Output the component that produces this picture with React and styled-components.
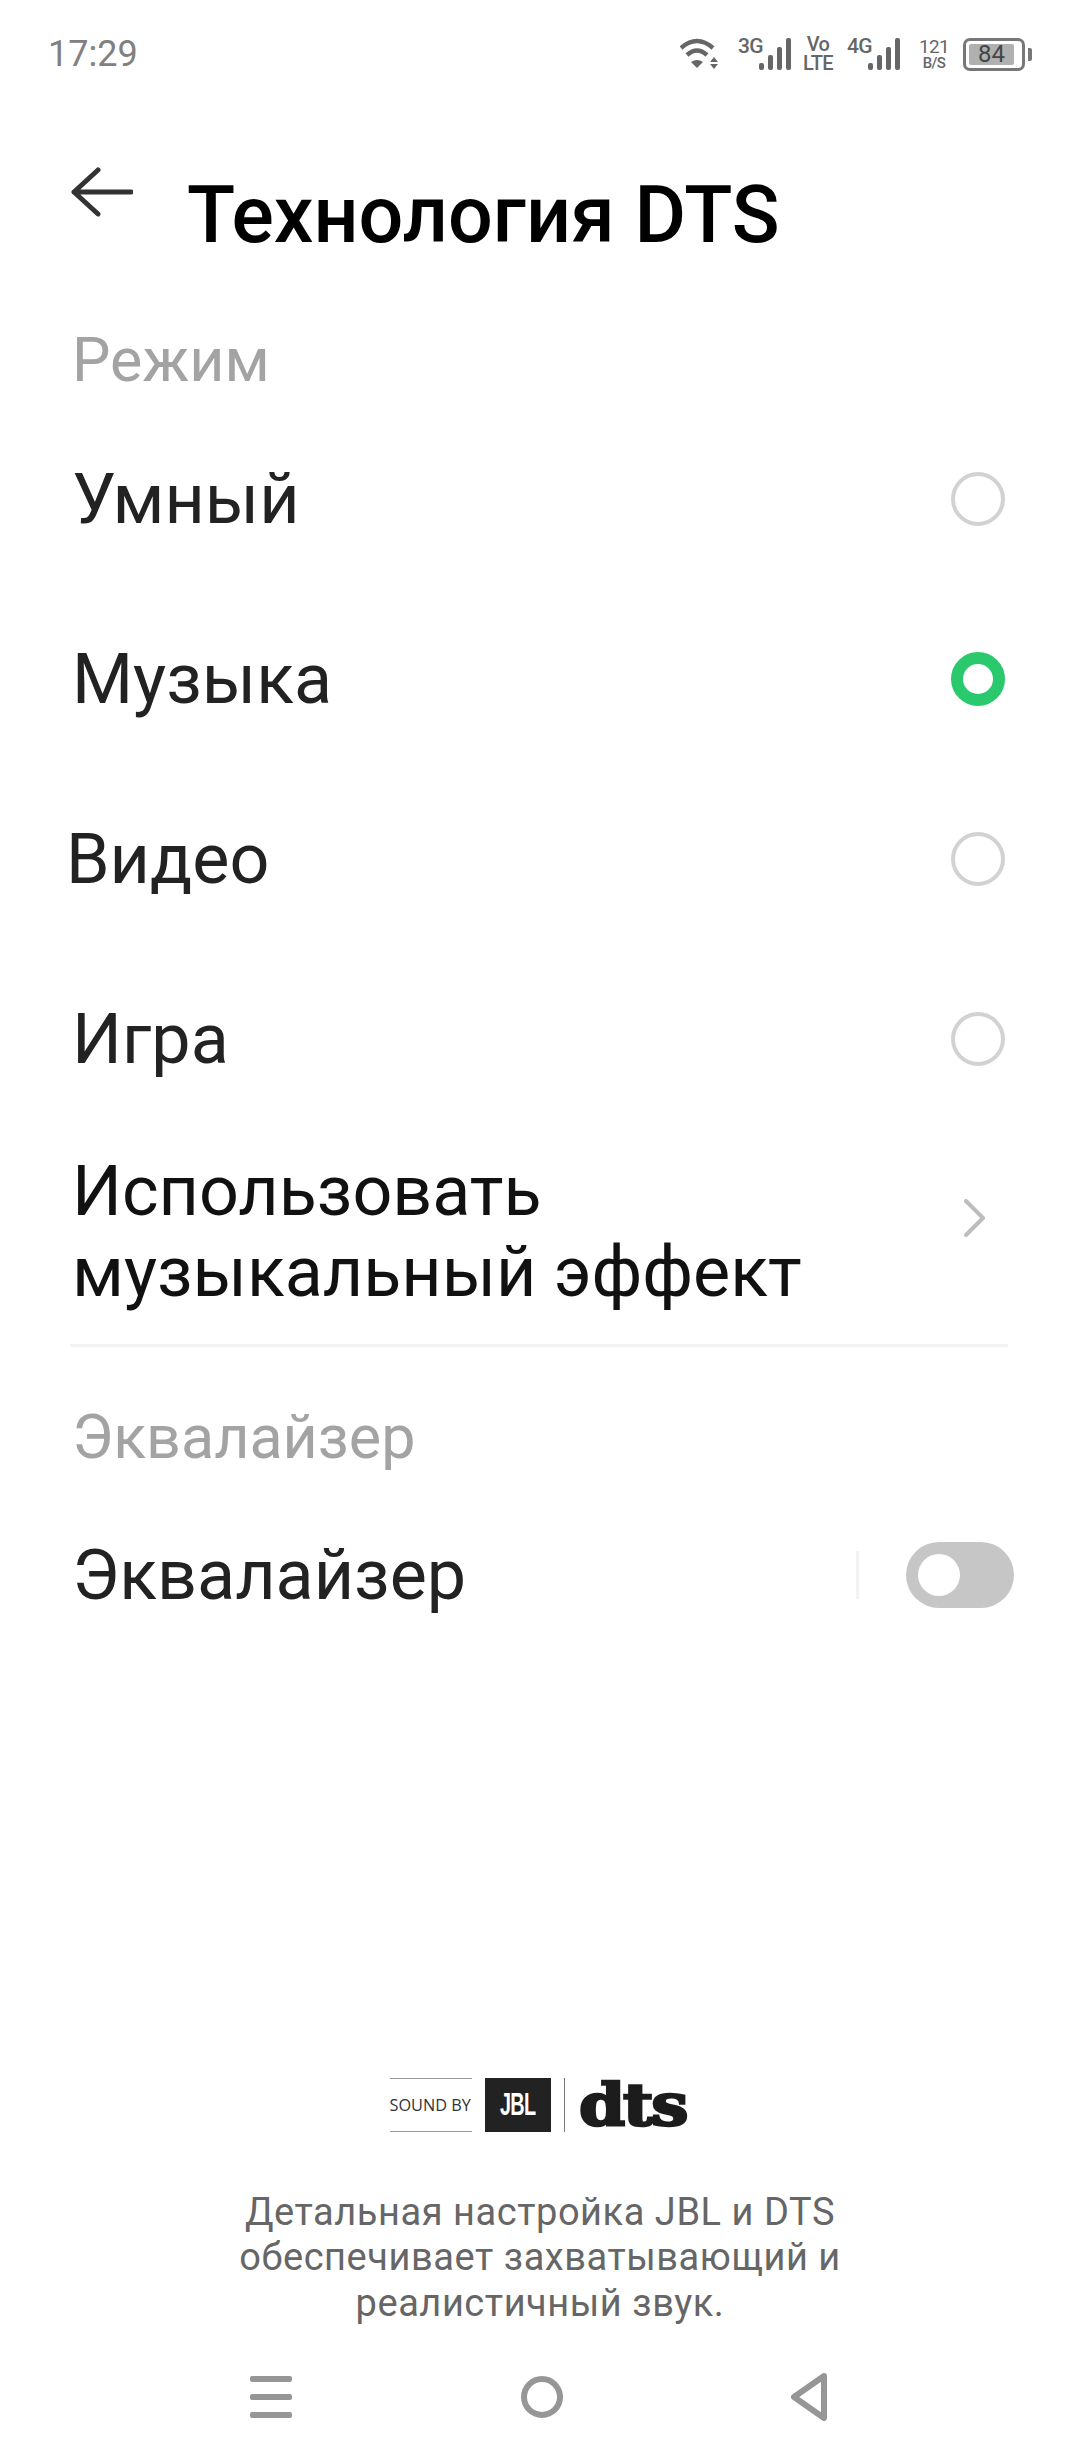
import React from "react";
import styled, { createGlobalStyle } from "styled-components";

const GlobalStyle = createGlobalStyle`
  html, body { margin: 0; padding: 0; background: #fff; }
  * { box-sizing: border-box; }
`;

const modes = [
  { label: "Умный" },
  { label: "Музыка", checked: true },
  { label: "Видео", shift: 66 },
  { label: "Игра" },
];

const Signal = () => (
  <svg width="32" height="32" viewBox="0 0 32 32" fill="#666">
    <rect x="0" y="25" width="5" height="7" rx="2" />
    <rect x="9" y="17" width="5" height="15" rx="2" />
    <rect x="18" y="9" width="5" height="23" rx="2" />
    <rect x="27" y="0" width="5" height="32" rx="2" />
  </svg>
);

const Wifi = () => (
  <svg width="38" height="32" viewBox="0 0 38 32" fill="none">
    <path d="M1 10 Q17 -4 33 10" stroke="#666" strokeWidth="4.5" />
    <path d="M7 17 Q17 8 27 17" stroke="#666" strokeWidth="4.5" />
    <path d="M11 24 Q17 20 23 24 L17 30 Z" fill="#666" />
    <path d="M34 19 L38 24 L30 24 Z M30 26 L38 26 L34 31 Z" fill="#666" />
  </svg>
);

const Chevron = () => (
  <ChevronIcon width="22" height="38" viewBox="0 0 22 38" fill="none">
    <path d="M2 2 L19 19 L2 36" stroke="#bdbdbd" strokeWidth="4" strokeLinecap="round" strokeLinejoin="round" />
  </ChevronIcon>
);

const App = () => {
  return (
    <Page>
      <GlobalStyle />
      <StatusBar>
        <Time>17:29</Time>
        <StatusIcons>
          <Wifi />
          <Network $left={20}>
            <NetLabel>3G</NetLabel>
            <Signal />
          </Network>
          <Stacked $left={12}>
            <span>Vo</span>
            <span>LTE</span>
          </Stacked>
          <Network $left={14}>
            <NetLabel>4G</NetLabel>
            <Signal />
          </Network>
          <Stacked $left={19}>
            <SpeedValue>121</SpeedValue>
            <SpeedUnit>B/S</SpeedUnit>
          </Stacked>
          <Battery>
            <BatteryBody>
              <BatteryLevel>84</BatteryLevel>
            </BatteryBody>
            <BatteryNub />
          </Battery>
        </StatusIcons>
      </StatusBar>

      <Header>
        <BackIcon width="62" height="50" viewBox="0 0 62 50" fill="none">
          <path d="M27 3 L3 25 L27 47 M3 25 L60 25" stroke="#333" strokeWidth="5" strokeLinecap="round" strokeLinejoin="round" />
        </BackIcon>
        <Title>Технология DTS</Title>
      </Header>

      <SectionLabel $top={55} $bottom={19}>Режим</SectionLabel>
      {modes.map((m) => (
        <Row key={m.label} $shift={m.shift}>
          <RowText>{m.label}</RowText>
          <Radio $checked={m.checked} />
        </Row>
      ))}
      <LinkRow>
        <LinkText>
          Использовать
          <br />
          музыкальный эффект
        </LinkText>
        <Chevron />
      </LinkRow>
      <Divider />

      <SectionLabel $top={60} $bottom={33}>Эквалайзер</SectionLabel>
      <SwitchRow>
        <RowText>Эквалайзер</RowText>
        <SwitchGroup>
          <SwitchSep />
          <Switch>
            <Knob />
          </Switch>
        </SwitchGroup>
      </SwitchRow>

      <Footer>
        <LogoRow>
          <SoundBy>SOUND BY</SoundBy>
          <JblBox>
            <JblText>JBL</JblText>
          </JblBox>
          <LogoSep />
          <DtsMark>dts</DtsMark>
        </LogoRow>
        <Description>
          Детальная настройка JBL и DTS
          <br />
          обеспечивает захватывающий и
          <br />
          реалистичный звук.
        </Description>
      </Footer>

      <NavBar>
        <svg width="42" height="44" viewBox="0 0 42 44" fill="#969696">
          <rect x="0" y="1" width="42" height="6" rx="2" />
          <rect x="0" y="19" width="42" height="6" rx="2" />
          <rect x="0" y="37" width="42" height="6" rx="2" />
        </svg>
        <svg width="42" height="44" viewBox="0 0 42 44" fill="none">
          <circle cx="21" cy="22" r="18" stroke="#969696" strokeWidth="6" />
        </svg>
        <svg width="36" height="48" viewBox="0 0 36 48" fill="none">
          <path d="M33 3 L3 24 L33 45 Z" stroke="#969696" strokeWidth="6" strokeLinejoin="round" />
        </svg>
      </NavBar>
    </Page>
  );
};

const Page = styled.div`
  width: 1080px;
  height: 2457px;
  display: flex;
  flex-direction: column;
  background: #fff;
  font-family: Roboto, "Noto Sans", sans-serif;
  overflow: hidden;
`;

const StatusBar = styled.div`
  height: 70px;
  margin-top: 19px;
  padding: 0 48px;
  display: flex;
  align-items: center;
  justify-content: space-between;
`;

const Time = styled.div`
  font-size: 36px;
  color: #808080;
`;

const StatusIcons = styled.div`
  display: flex;
  align-items: center;
  height: 34px;
  color: #666;
`;

const Network = styled.div`
  display: flex;
  align-items: flex-start;
  margin-left: ${(p) => p.$left}px;
`;

const NetLabel = styled.span`
  width: 21px;
  font-size: 21px;
  font-weight: 500;
  line-height: 17px;
  letter-spacing: -0.6px;
  white-space: nowrap;
`;

const Stacked = styled.div`
  display: flex;
  flex-direction: column;
  align-items: center;
  width: 30px;
  font-size: 20px;
  font-weight: 500;
  line-height: 19px;
  letter-spacing: -0.6px;
  margin-left: ${(p) => p.$left}px;
`;

const SpeedValue = styled.span`
  font-size: 19px;
  font-weight: 400;
`;

const SpeedUnit = styled.span`
  font-size: 15px;
  line-height: 15px;
`;

const Battery = styled.div`
  display: flex;
  align-items: center;
  gap: 3px;
  margin-left: 14px;
`;

const BatteryBody = styled.div`
  width: 62px;
  height: 33px;
  border: 3px solid #777;
  border-radius: 7px;
  padding: 3px;
  display: flex;
`;

const BatteryLevel = styled.div`
  width: 45px;
  background: #b0b0b0;
  border-radius: 2px;
  font-size: 24px;
  line-height: 21px;
  text-align: center;
  color: #444;
`;

const BatteryNub = styled.div`
  width: 4px;
  height: 13px;
  background: #777;
  border-radius: 0 2px 2px 0;
`;

const Header = styled.div`
  height: 120px;
  margin-top: 66px;
  padding-left: 71px;
  display: flex;
  align-items: center;
  gap: 54px;
`;

const BackIcon = styled.svg`
  margin-top: -46px;
  flex: none;
`;

const Title = styled.h1`
  margin: 0;
  font-size: 79px;
  font-weight: 500;
  color: #000;
  white-space: nowrap;
`;

const SectionLabel = styled.div`
  margin-top: ${(p) => p.$top}px;
  margin-bottom: ${(p) => p.$bottom}px;
  padding-left: 72px;
  height: 60px;
  line-height: 60px;
  font-size: 61px;
  color: #a3a3a3;
`;

const Row = styled.div`
  height: 180px;
  flex: none;
  padding: 0 75px 0 ${(p) => p.$shift || 72}px;
  display: flex;
  align-items: center;
  justify-content: space-between;
`;

const RowText = styled.div`
  font-size: 70px;
  color: #222;
`;

const Radio = styled.div`
  width: 54px;
  height: 54px;
  border-radius: 50%;
  border: ${(p) => (p.$checked ? "12.5px solid #2ac96d" : "4px solid #d2d2d2")};
`;

const LinkRow = styled.div`
  padding: 0 94px 0 72px;
  display: flex;
  align-items: center;
  justify-content: space-between;
  height: 206px;
  flex: none;
`;

const LinkText = styled.div`
  font-size: 70px;
  line-height: 81px;
  color: #111;
`;

const ChevronIcon = styled.svg`
  margin-top: -28px;
`;

const Divider = styled.div`
  height: 3px;
  flex: none;
  margin: 9px 72px 0 70px;
  background: #f4f2f4;
`;

const SwitchRow = styled.div`
  height: 150px;
  flex: none;
  padding: 0 66px 0 72px;
  display: flex;
  align-items: center;
  justify-content: space-between;
`;

const SwitchGroup = styled.div`
  display: flex;
  align-items: center;
  gap: 47px;
`;

const SwitchSep = styled.div`
  width: 3px;
  height: 48px;
  background: #f4f2f4;
`;

const Switch = styled.div`
  position: relative;
  width: 108px;
  height: 66px;
  border-radius: 33px;
  background: #c6c6c6;
`;

const Knob = styled.div`
  position: absolute;
  left: 12px;
  top: 12px;
  width: 42px;
  height: 42px;
  border-radius: 50%;
  background: #fff;
`;

const Footer = styled.div`
  margin-top: auto;
  display: flex;
  flex-direction: column;
  align-items: center;
`;

const LogoRow = styled.div`
  display: flex;
  align-items: center;
  height: 54px;
`;

const SoundBy = styled.div`
  width: 82px;
  height: 54px;
  border-top: 1px solid #999;
  border-bottom: 1px solid #999;
  font-family: "Open Sans", sans-serif;
  font-size: 16.3px;
  line-height: 52px;
  white-space: nowrap;
  color: #333;
`;

const JblBox = styled.div`
  width: 66px;
  height: 54px;
  margin-left: 13px;
  background: #222;
  display: flex;
  align-items: center;
  justify-content: center;
`;

const JblText = styled.span`
  color: #fff;
  font-family: "Liberation Sans", sans-serif;
  font-weight: 700;
  font-size: 32px;
  letter-spacing: -1px;
  transform: scaleX(0.62);
`;

const LogoSep = styled.div`
  width: 1px;
  height: 54px;
  margin-left: 13px;
  background: #777;
`;

const DtsMark = styled.div`
  width: 112px;
  margin-left: 14px;
  font-family: "DejaVu Serif", serif;
  font-weight: 700;
  font-size: 58px;
  line-height: 54px;
  letter-spacing: -2px;
  white-space: nowrap;
  color: #1c1c1c;
  -webkit-text-stroke: 2.5px #1c1c1c;
  transform: scaleX(1.14);
  transform-origin: left center;
`;

const Description = styled.div`
  margin-top: 58px;
  font-size: 38px;
  line-height: 45.5px;
  letter-spacing: 0.55px;
  text-align: center;
  color: #666;
`;

const NavBar = styled.div`
  height: 82px;
  margin-top: 30px;
  margin-bottom: 19px;
  padding: 0 253px 0 250px;
  display: flex;
  align-items: center;
  justify-content: space-between;
`;

export default App;
